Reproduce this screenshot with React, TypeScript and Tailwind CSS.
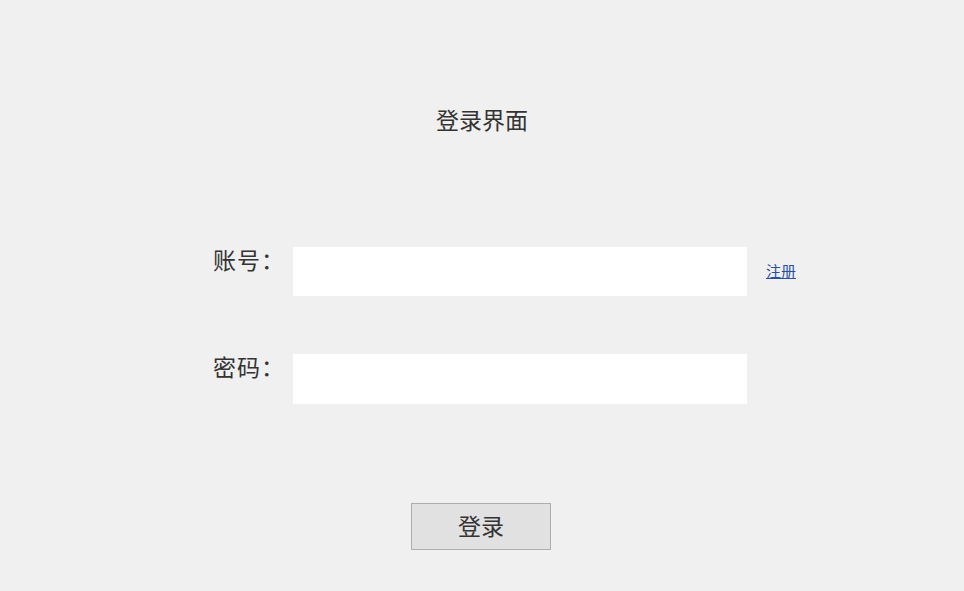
export default function App() {
  const cjk = { fontFamily: '"Noto Sans CJK SC", "Noto Sans", sans-serif' };
  return (
    <div className="w-full h-[591px] bg-[#f0f0f0] text-[#222]" style={cjk}>
      <div className="pt-[105px] flex flex-col">
        <h1 className="w-[964px] text-center text-[23px] leading-[28px] font-normal text-[#333]">登录界面</h1>

        <div className="mt-[114px] flex items-start pl-[213px]">
          <label className="w-[80px] text-[23px] leading-[28px] -mt-[2px] text-[#333] tracking-[1px]">账号：</label>
          <input className="w-[454px] h-[49px] bg-white outline-none border-0" />
          <a href="#" className="ml-[19px] mt-[14px] text-[15px] leading-[20px] text-[#2a4f9e] underline">注册</a>
        </div>

        <div className="mt-[58px] flex items-start pl-[213px]">
          <label className="w-[80px] text-[23px] leading-[28px] -mt-[2px] text-[#333] tracking-[1px]">密码：</label>
          <input type="password" className="w-[454px] h-[50px] bg-white outline-none border-0" />
        </div>

        <div className="mt-[99px] pl-[411px]">
          <button className="w-[140px] h-[47px] bg-[#e1e1e1] border border-[#adadad] text-[23px] leading-[28px] pb-[3px] text-[#333]">登录</button>
        </div>
      </div>
    </div>
  );
}
